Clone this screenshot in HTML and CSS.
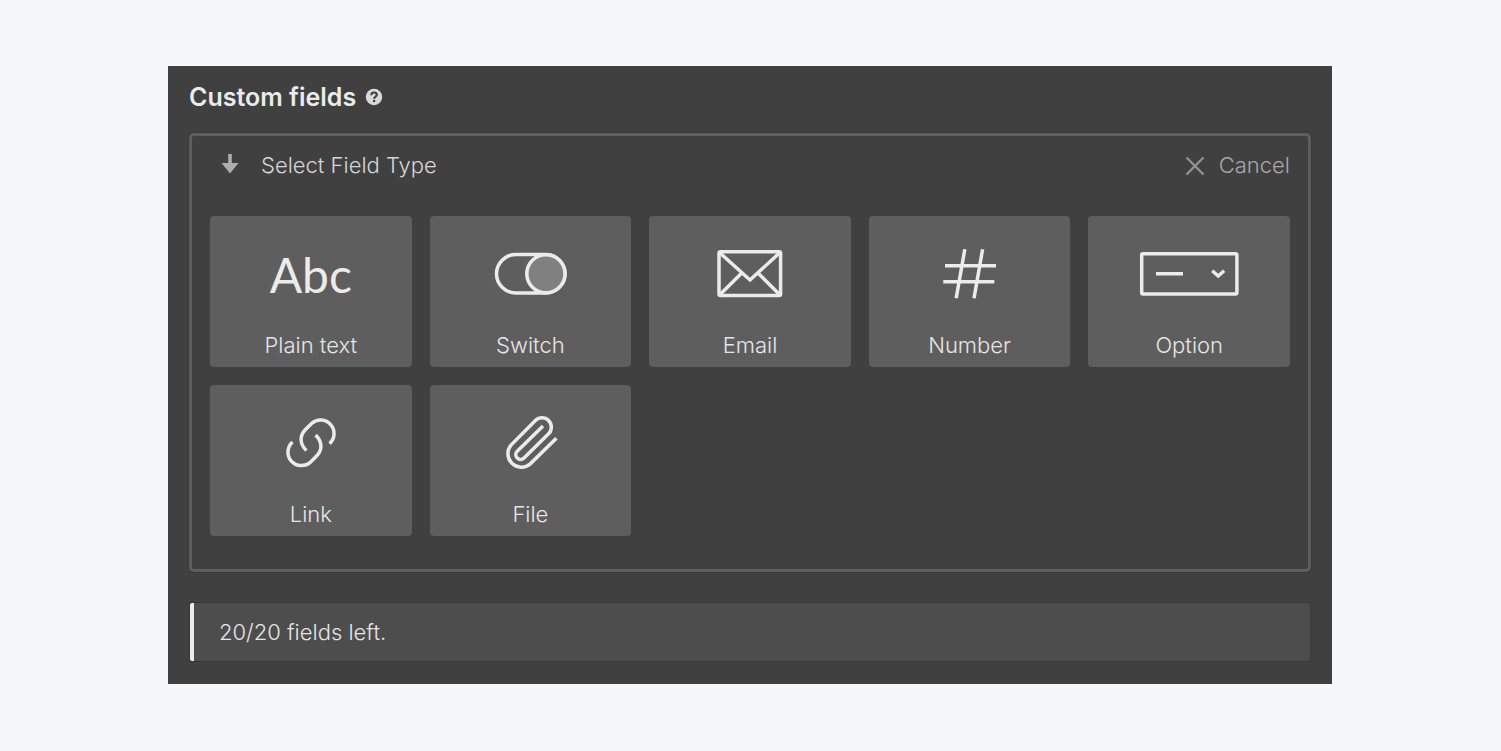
FILE: index.html
```html
<!DOCTYPE html>
<html lang="en">
<head>
  <meta charset="UTF-8">
  <meta name="viewport" content="width=device-width, initial-scale=1.0">
  <title>Custom fields</title>
  <link rel="stylesheet" href="styles.css">
</head>
<body>
  <main class="panel">
    <header class="panel-header">
      <h1>Custom fields</h1>
      <button type="button" class="help-btn" aria-label="Help">
        <svg width="18" height="18" viewBox="0 0 18 18">
          <circle cx="9" cy="9" r="8.2" fill="#d9d9d9"/>
          <path d="M6.2 7.2C6.3 5.4 7.4 4.5 9 4.5C10.7 4.5 11.8 5.5 11.8 6.9C11.8 8.7 9.1 8.6 9.1 10.7" fill="none" stroke="#404040" stroke-width="2.1"/>
          <rect x="8" y="11.9" width="2.2" height="2.2" fill="#404040"/>
        </svg>
      </button>
    </header>

    <!-- Field type picker -->
    <section class="picker">
      <div class="picker-header">
        <svg class="arrow" width="18" height="22" viewBox="0 0 18 22">
          <path d="M7.2 0H10.8V9H17.5L9 19.5L0.5 9H7.2Z" fill="#adadad"/>
        </svg>
        <h2>Select Field Type</h2>
        <button type="button" class="cancel-btn">
          <svg width="20" height="22" viewBox="0 0 20 22">
            <path d="M1.5 3.5L18.5 20.5M18.5 3.5L1.5 20.5" stroke="#919191" stroke-width="2.4"/>
          </svg>
          Cancel
        </button>
      </div>

      <div class="field-grid">
        <button type="button" class="field-card">
          <span class="icon abc" aria-hidden="true">Abc</span>
          <span class="label">Plain text</span>
        </button>

        <button type="button" class="field-card">
          <svg class="icon" viewBox="0 0 100 60">
            <rect x="16.5" y="10.5" width="68.5" height="38.5" rx="19.25"/>
            <circle class="knob" cx="65.9" cy="29.75" r="19.1"/>
          </svg>
          <span class="label">Switch</span>
        </button>

        <button type="button" class="field-card">
          <svg class="icon" viewBox="0 0 100 60">
            <rect x="19" y="7.8" width="61.6" height="43.8" rx="1.5"/>
            <path d="M19.5 8.5L50 36L80 8.5M41.8 29L19.5 51M58 29L80 51"/>
          </svg>
          <span class="label">Email</span>
        </button>

        <button type="button" class="field-card">
          <svg class="icon" viewBox="0 0 100 60">
            <path d="M44.8 5.3L36.2 54.3M62.6 5.3L54 54.3M25 21.7H76M23.3 37.8H74.3"/>
          </svg>
          <span class="label">Number</span>
        </button>

        <button type="button" class="field-card">
          <svg class="icon" viewBox="0 0 100 60">
            <rect x="2.7" y="9.8" width="95.2" height="40.2" rx="1.5"/>
            <path d="M17 29.8H44M73.2 26.8L79.2 32L85.2 26.8"/>
          </svg>
          <span class="label">Option</span>
        </button>

        <button type="button" class="field-card">
          <svg class="icon" viewBox="0 0 100 60">
            <path d="M45.4 37.5C38.9 31.5 38.3 23 44 17L50.6 10.4A13.3 13.3 0 1 1 68.5 30.6"/>
            <path d="M45.4 37.5C38.9 31.5 38.3 23 44 17L50.6 10.4A13.3 13.3 0 1 1 68.5 30.6" transform="rotate(180 50 29.8)"/>
          </svg>
          <span class="label">Link</span>
        </button>

        <button type="button" class="field-card">
          <svg class="icon" viewBox="0 0 100 60">
            <path d="M63 12.9L37.2 38.2A4.8 4.8 0 0 0 44 45L68.6 20.8A9.3 9.3 0 0 0 55.4 7.6L31 32.1A13.5 13.5 0 0 0 50 51.1L76.4 25.2"/>
          </svg>
          <span class="label">File</span>
        </button>
      </div>
    </section>

    <p class="notice">20/20 fields left.</p>
  </main>
</body>
</html>
```
FILE: styles.css
```css
* {
  margin: 0;
  padding: 0;
  box-sizing: border-box;
}

body {
  font-family: Inter, sans-serif;
  font-size: 22px;
  font-weight: 300;
  line-height: 28px;
  background: #f6f7f9;
  color: #e6e6e6;
  padding: 66px 169px 66px 168px;
}

button {
  font: inherit;
  color: inherit;
  background: none;
  border: none;
  cursor: pointer;
}

svg {
  display: block;
}

.panel {
  background: #404040;
  padding: 16px 21px 23px;
}

.panel-header {
  display: flex;
  align-items: center;
  gap: 9px;
  height: 30px;
  margin-bottom: 21px;
}

.panel-header h1 {
  font-size: 25px;
  font-weight: 600;
  color: #ebebeb;
}

/* Field type picker */
.picker {
  border: 3px solid #5e5e5e;
  border-radius: 5px;
  box-shadow: 0 0 0 1px #393939;
  padding: 15px 18px 33px;
}

.picker-header {
  display: flex;
  align-items: center;
  margin-bottom: 37px;
}

.picker-header h2 {
  font-size: 22px;
  font-weight: 300;
  color: #d6d6d6;
}

.arrow {
  margin: 0 22px 0 11px;
}

.cancel-btn {
  display: flex;
  align-items: center;
  gap: 14px;
  margin-left: auto;
  color: #a8a8a8;
}

.field-grid {
  display: grid;
  grid-template-columns: repeat(5, 1fr);
  gap: 18px;
}

.field-card {
  display: flex;
  flex-direction: column;
  align-items: center;
  justify-content: space-between;
  padding: 28px 8px 8px;
  height: 151px;
  background: #5e5e5e;
  border-radius: 4px;
}

.field-card:hover {
  background: #686868;
}

.icon {
  width: 100px;
  height: 60px;
  fill: none;
  stroke: #ebebeb;
  stroke-width: 3.5;
}

.knob {
  fill: #808080;
}

.abc {
  font-family: Lato, sans-serif;
  font-size: 48px;
  font-weight: 400;
  line-height: 62px;
  color: #ebebeb;
}

/* Remaining fields */
.notice {
  margin: 31px 1px 0;
  padding: 15px 25px;
  background: #4d4d4d;
  border-left: 4px solid #ebebeb;
  border-radius: 2px;
  box-shadow: 0 0 0 1px #393939;
}
```
